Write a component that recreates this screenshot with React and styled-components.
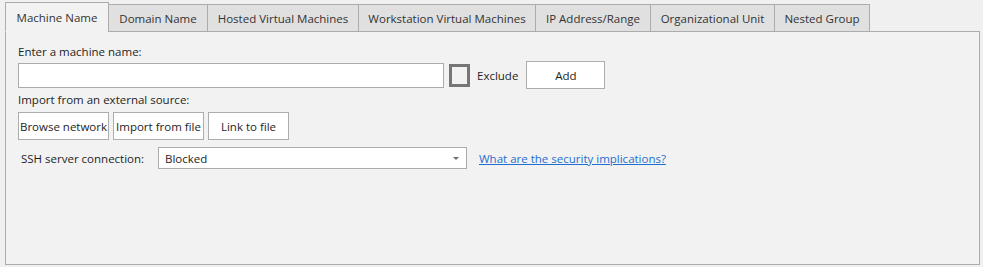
import React, { useState } from "react";
import styled, { createGlobalStyle } from "styled-components";

const GlobalStyle = createGlobalStyle`
  html, body {
    margin: 0;
    padding: 0;
    background: #f0f0f0;
  }
  body {
    font-family: "Open Sans", "Noto Sans", "Liberation Sans", sans-serif;
    font-size: 11.5px;
    color: #1e1e1e;
  }
`;

const tabs = [
  { label: "Machine Name", width: 104 },
  { label: "Domain Name", width: 100 },
  { label: "Hosted Virtual Machines", width: 152 },
  { label: "Workstation Virtual Machines", width: 178 },
  { label: "IP Address/Range", width: 116 },
  { label: "Organizational Unit", width: 125 },
  { label: "Nested Group", width: 96 },
];

const Page = styled.div`
  width: 983px;
  height: 267px;
  padding: 2px 3px 2px 5px;
  box-sizing: border-box;
  display: flex;
  flex-direction: column;
`;

const TabStrip = styled.div`
  display: flex;
  align-items: flex-end;
  height: 30px;
  position: relative;
  z-index: 1;
  margin-bottom: -1px;
`;

const Tab = styled.div`
  box-sizing: border-box;
  width: ${(p) => p.$width}px;
  height: ${(p) => (p.$active ? 30 : 28)}px;
  display: flex;
  align-items: center;
  justify-content: center;
  padding-top: ${(p) => (p.$active ? 0 : 1)}px;
  background: ${(p) => (p.$active ? "#f2f2f2" : "#e0e0e0")};
  border: 1px solid #acacac;
  border-bottom: ${(p) => (p.$active ? "1px solid #f2f2f2" : "1px solid #acacac")};
  margin-left: ${(p) => (p.$first ? 0 : -1)}px;
  color: #333;
  white-space: nowrap;
  cursor: default;
`;

const Panel = styled.div`
  flex: 1;
  box-sizing: border-box;
  border: 1px solid #acacac;
  background: #f2f2f2;
  padding: 12px 12px 0;
  display: flex;
  flex-direction: column;
`;

const Label = styled.div`
  height: 16px;
  line-height: 16px;
  margin-top: ${(p) => p.$top || 0}px;
`;

const Row = styled.div`
  display: flex;
  align-items: center;
  margin-top: ${(p) => p.$top || 0}px;
  height: ${(p) => p.$height}px;
`;

const TextInput = styled.input`
  box-sizing: border-box;
  width: 426px;
  height: 25px;
  border: 1px solid #ababab;
  background: #fff;
  outline: none;
  font: inherit;
  padding: 0 4px;
  margin-top: 1px;
`;

const Check = styled.span`
  box-sizing: border-box;
  width: 21px;
  height: 23px;
  border: 3px solid #767676;
  background: #f2f2f2;
  margin-left: 5px;
  margin-top: 1px;
`;

const CheckLabel = styled.span`
  margin-left: 7px;
  margin-right: 8px;
`;

const Button = styled.button`
  box-sizing: border-box;
  width: ${(p) => p.$width}px;
  height: ${(p) => p.$height || 28}px;
  border: 1px solid #adadad;
  background: #fff;
  font: inherit;
  color: #1e1e1e;
  padding: 0;
  margin-right: ${(p) => p.$gap || 0}px;
  white-space: nowrap;
  cursor: default;
`;

const FieldLabel = styled.span`
  width: 137px;
  padding-left: 3px;
`;

const SelectBox = styled.div`
  box-sizing: border-box;
  width: 309px;
  height: 22px;
  border: 1px solid #ababab;
  background: #fff;
  display: flex;
  align-items: center;
  justify-content: space-between;
  padding: 0 7px 0 6px;
`;

const Caret = styled.span`
  width: 0;
  height: 0;
  border-left: 3px solid transparent;
  border-right: 3px solid transparent;
  border-top: 3px solid #6d6d6d;
  margin-top: 1px;
`;

const HelpLink = styled.a`
  margin-left: 12px;
  color: #1f6fd0;
  text-decoration: underline;
  cursor: pointer;
`;

export default function App() {
  const [active, setActive] = useState(0);

  return (
    <>
      <GlobalStyle />
      <Page>
        <TabStrip>
          {tabs.map((t, i) => (
            <Tab
              key={t.label}
              $width={t.width}
              $active={i === active}
              $first={i === 0}
              onClick={() => setActive(i)}
            >
              {t.label}
            </Tab>
          ))}
        </TabStrip>
        <Panel>
          <Label>Enter a machine name:</Label>
          <Row $top={1} $height={28}>
            <TextInput type="text" />
            <Check />
            <CheckLabel>Exclude</CheckLabel>
            <Button $width={79}>Add</Button>
          </Row>
          <Label $top={3}>Import from an external source:</Label>
          <Row $top={4} $height={28}>
            <Button $width={91} $gap={4}>Browse network</Button>
            <Button $width={91} $gap={4}>Import from file</Button>
            <Button $width={81}>Link to file</Button>
          </Row>
          <Row $top={7} $height={22}>
            <FieldLabel>SSH server connection:</FieldLabel>
            <SelectBox>
              <span>Blocked</span>
              <Caret />
            </SelectBox>
            <HelpLink>What are the security implications?</HelpLink>
          </Row>
        </Panel>
      </Page>
    </>
  );
}
